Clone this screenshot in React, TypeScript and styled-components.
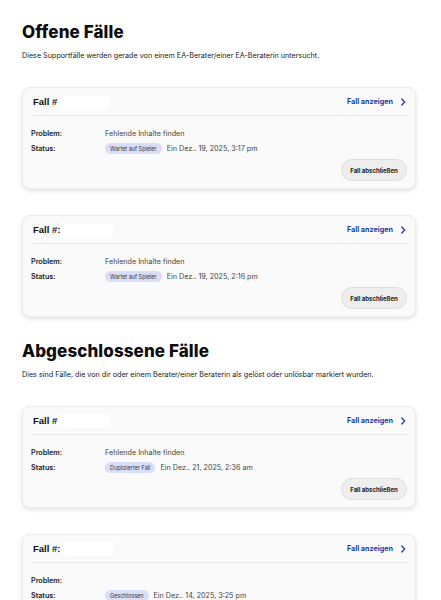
import type { FC } from 'react';
import styled, { createGlobalStyle } from 'styled-components';

type CaseItem = {
  suffix?: string;
  problem: string;
  status: string;
  date: string;
};

const openCases: CaseItem[] = [
  { problem: 'Fehlende Inhalte finden', status: 'Wartet auf Spieler', date: 'Ein Dez.. 19, 2025, 3:17 pm' },
  { suffix: ':', problem: 'Fehlende Inhalte finden', status: 'Wartet auf Spieler', date: 'Ein Dez.. 19, 2025, 2:16 pm' },
];

const closedCases: CaseItem[] = [
  { problem: 'Fehlende Inhalte finden', status: 'Duplizierter Fall', date: 'Ein Dez.. 21, 2025, 2:36 am' },
  { suffix: ':', problem: '', status: 'Geschlossen', date: 'Ein Dez.. 14, 2025, 3:25 pm' },
];

const Chevron: FC = () => (
  <svg width="6" height="8" viewBox="0 0 6 8" fill="none">
    <path d="M1.8 1 L4.6 4 L1.8 7" stroke="#1b3aa8" strokeWidth="1.3" strokeLinecap="round" strokeLinejoin="round" />
  </svg>
);

const CaseCard: FC<{ item: CaseItem }> = ({ item }) => (
  <Card>
    <CardHeader>
      <CaseTitle>
        Fall #{item.suffix}
        <Masked />
      </CaseTitle>
      <ViewLink href="#">
        Fall anzeigen
        <Chevron />
      </ViewLink>
    </CardHeader>
    <Rows>
      <Row>
        <Label>Problem:</Label>
        <Value>{item.problem}</Value>
      </Row>
      <Row>
        <Label>Status:</Label>
        <Pill>{item.status}</Pill>
        <Value>{item.date}</Value>
      </Row>
    </Rows>
    <Actions>
      <CloseButton>Fall abschließen</CloseButton>
    </Actions>
  </Card>
);

const App: FC = () => (
  <>
    <GlobalStyle />
    <Page>
      <Section>
        <Title>Offene Fälle</Title>
        <Description>
          Diese Supportfälle werden gerade von einem EA-Berater/einer EA-Beraterin untersucht.
        </Description>
        <CardList>
          {openCases.map((c, i) => (
            <CaseCard key={i} item={c} />
          ))}
        </CardList>
      </Section>
      <Section>
        <Title>Abgeschlossene Fälle</Title>
        <Description>
          Dies sind Fälle, die von dir oder einem Berater/einer Beraterin als gelöst oder unlösbar markiert wurden.
        </Description>
        <CardList>
          {closedCases.map((c, i) => (
            <CaseCard key={i} item={c} />
          ))}
        </CardList>
      </Section>
    </Page>
  </>
);

export default App;

const GlobalStyle = createGlobalStyle`
  body {
    margin: 0;
    background: #ffffff;
    font-family: Inter, "Noto Sans", sans-serif;
    color: #1a1a1a;
  }
`;

const Page = styled.div`
  padding: 22px 25px 40px 22px;
  display: flex;
  flex-direction: column;
  gap: 24px;
`;

const Section = styled.section`
  display: flex;
  flex-direction: column;
`;

const Title = styled.h1`
  margin: 0;
  font-family: Inter, sans-serif;
  font-size: 17px;
  line-height: 20px;
  font-weight: 800;
  letter-spacing: 0.1px;
  color: #0d0d0d;
`;

const Description = styled.p`
  margin: 9px 0 0;
  font-size: 7.2px;
  line-height: 10px;
  color: #222;
`;

const CardList = styled.div`
  margin-top: 26px;
  display: flex;
  flex-direction: column;
  gap: 26px;
`;

const Card = styled.div`
  background: #fafafa;
  border: 1px solid #ececec;
  border-radius: 8px;
  box-shadow: 0 2px 4px rgba(0, 0, 0, 0.12);
  padding: 0 8px 7px;
`;

const CardHeader = styled.div`
  height: 27px;
  display: flex;
  align-items: center;
  justify-content: space-between;
  border-bottom: 1px solid #e6e6e6;
  padding: 0 1px 0 2px;
`;

const CaseTitle = styled.div`
  display: flex;
  align-items: center;
  font-family: "Liberation Sans", Arial, sans-serif;
  font-weight: 700;
  font-size: 9.5px;
  color: #111;
`;

const Masked = styled.span`
  display: inline-block;
  width: 52px;
  height: 14px;
  background: #ffffff;
  border-radius: 2px;
  margin-left: 1px;
`;

const ViewLink = styled.a`
  display: flex;
  align-items: center;
  gap: 7px;
  font-size: 7.2px;
  font-weight: 700;
  color: #1b3aa8;
  text-decoration: none;
`;

const Rows = styled.div`
  padding-top: 10px;
  display: flex;
  flex-direction: column;
`;

const Row = styled.div`
  height: 15px;
  display: flex;
  align-items: center;
`;

const Label = styled.span`
  width: 74px;
  flex-shrink: 0;
  font-size: 7.2px;
  font-weight: 600;
  color: #1a1a1a;
`;

const Value = styled.span`
  font-size: 7.2px;
  color: #444;
`;

const Pill = styled.span`
  display: inline-flex;
  align-items: center;
  height: 11px;
  padding: 0 5px;
  margin-right: 5px;
  border-radius: 6px;
  background: #d7dffb;
  font-size: 5.5px;
  color: #333;
`;

const Actions = styled.div`
  margin-top: 3px;
  display: flex;
  justify-content: flex-end;
`;

const CloseButton = styled.button`
  height: 22px;
  width: 66px;
  border: 1px solid #dedede;
  border-radius: 11px;
  background: #eeeeee;
  font-family: Inter, sans-serif;
  font-size: 6px;
  font-weight: 700;
  color: #222;
  padding: 0;
  cursor: pointer;
`;
